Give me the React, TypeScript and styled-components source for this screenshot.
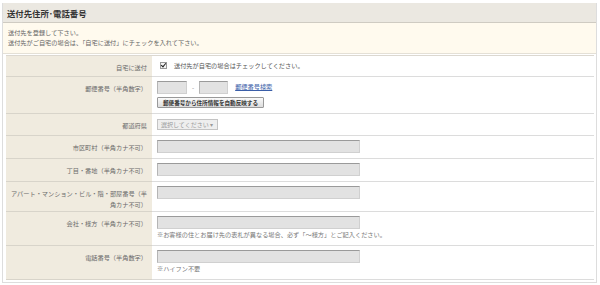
import React from "react";
import styled, { createGlobalStyle } from "styled-components";

const GlobalStyle = createGlobalStyle`
  body {
    margin: 0;
    background: #fff;
    font-family: "Noto Sans CJK JP", "Noto Sans", sans-serif;
    color: #555;
  }
`;

const Frame = styled.section`
  width: 595px;
  margin: 3px 0 0 2px;
  border: 1px solid #ddd;
  border-top: none;
  box-sizing: border-box;
  background: #fff;
  padding-bottom: 2px;
`;

const Header = styled.h2`
  margin: 0;
  height: 19px;
  padding-left: 4px;
  display: flex;
  align-items: center;
  background: #ebe8e1;
  border-bottom: 1px solid #cfcbc2;
  font-size: 8.4px;
  font-weight: bold;
  color: #333;
`;

const Intro = styled.div`
  background: #fffaee;
  padding: 5px 5px;
  border-bottom: 1px solid #e4e0d6;
  font-size: 6.2px;
  line-height: 10px;
  color: #666;
`;

const Table = styled.div`
  margin: 1px 2px 0 3px;
  display: grid;
  grid-template-columns: 146px 1fr;
  border-top: 1px solid #dcd8d0;
`;

const Label = styled.div`
  background: #f0ebdf;
  text-align: right;
  padding: 6px 5px 1px 3px;
  font-size: 6.2px;
  line-height: 11px;
  color: #6a6a6a;
  border-bottom: 1px solid #d8d4ca;
`;

const Value = styled.div`
  padding: 4px 6px 5px 5px;
  font-size: 6.2px;
  line-height: 11px;
  color: #555;
  border-bottom: 1px solid #dcdcdc;
  display: flex;
  flex-direction: column;
  align-items: flex-start;
`;

const Line = styled.div`
  display: flex;
  align-items: center;
  gap: 4px;
`;

const Check = styled.span`
  width: 5px;
  height: 5px;
  margin: 0 3px 0 3px;
  border: 1px solid #999;
  background: #f4f4f4;
  position: relative;
  &::after {
    content: "";
    position: absolute;
    left: 1px;
    top: -1px;
    width: 2px;
    height: 4px;
    border: solid #222;
    border-width: 0 1px 1px 0;
    transform: rotate(40deg);
  }
`;

const TextBox = styled.span<{ $w: number }>`
  display: block;
  width: ${(p) => p.$w}px;
  height: 13px;
  box-sizing: border-box;
  background: #e2e2e2;
  border: 1px solid #d0d0d0;
  border-top-color: #9a9a9a;
  border-left-color: #b5b5b5;
`;

const Dash = styled.span`
  color: #888;
  padding: 0 1px;
`;

const Link = styled.a`
  color: #3a5ea8;
  text-decoration: underline;
  margin-left: 3px;
  margin-top: -3px;
`;

const Button = styled.button`
  margin-top: 3px;
  height: 11px;
  width: 107px;
  padding: 0;
  font-family: inherit;
  font-size: 5.6px;
  font-weight: bold;
  color: #333;
  border: 1px solid #999;
  border-radius: 1px;
  background: linear-gradient(#fafafa, #dcdcdc);
  display: flex;
  align-items: center;
  justify-content: center;
`;

const Select = styled.span`
  display: flex;
  align-items: center;
  height: 11px;
  width: 61px;
  box-sizing: border-box;
  padding-left: 3px;
  background: #eeeeee;
  border: 1px solid #c4c4c4;
  color: #999;
  font-size: 6px;
  margin-top: 1px;
`;

const Note = styled.div`
  color: #777;
`;

type Row = { label: string; content: React.ReactNode };

const rows: Row[] = [
  {
    label: "自宅に送付",
    content: (
      <Line>
        <Check />
        送付先が自宅の場合はチェックしてください。
      </Line>
    ),
  },
  {
    label: "郵便番号（半角数字）",
    content: (
      <>
        <Line>
          <TextBox $w={30} />
          <Dash>-</Dash>
          <TextBox $w={29} />
          <Link>郵便番号検索</Link>
        </Line>
        <Button>郵便番号から住所情報を自動反映する</Button>
      </>
    ),
  },
  {
    label: "都道府県",
    content: <Select>選択してください ▾</Select>,
  },
  { label: "市区町村（半角カナ不可）", content: <TextBox $w={203} /> },
  { label: "丁目・番地（半角カナ不可）", content: <TextBox $w={203} /> },
  {
    label: "アパート・マンション・ビル・階・部屋番号（半角カナ不可）",
    content: <TextBox $w={203} />,
  },
  {
    label: "会社・様方（半角カナ不可）",
    content: (
      <>
        <TextBox $w={203} />
        <Note>※お客様の住とお届け先の表札が異なる場合、必ず「～様方」とご記入ください。</Note>
      </>
    ),
  },
  {
    label: "電話番号（半角数字）",
    content: (
      <>
        <TextBox $w={203} />
        <Note>※ハイフン不要</Note>
      </>
    ),
  },
];

const App: React.FC = () => {
  return (
    <>
      <GlobalStyle />
      <Frame>
        <Header>送付先住所･電話番号</Header>
        <Intro>
          送付先を登録して下さい。
          <br />
          送付先がご自宅の場合は、「自宅に送付」にチェックを入れて下さい。
        </Intro>
        <Table>
          {rows.map((r) => (
            <React.Fragment key={r.label}>
              <Label>{r.label}</Label>
              <Value>{r.content}</Value>
            </React.Fragment>
          ))}
        </Table>
      </Frame>
    </>
  );
};

export default App;
